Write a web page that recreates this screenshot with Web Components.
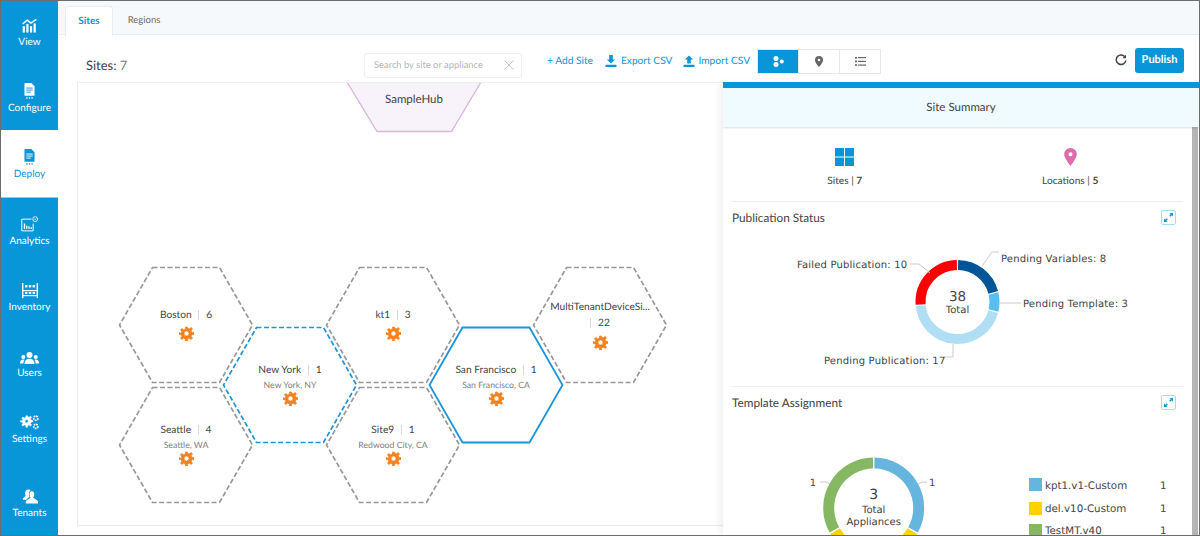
<!DOCTYPE html>
<html>
<head>
<meta charset="utf-8">
<title>Sites</title>
<style>
    html, body { margin: 0; height: 100%; overflow: hidden; background: #fff; }
    body { font-family: Lato, "Open Sans", sans-serif; color: #444; text-rendering: geometricPrecision; }
</style>
</head>
<body>
<app-shell>
    <side-nav slot="nav">
        <nav-item label="View" icon="view"></nav-item>
        <nav-item label="Configure" icon="doc"></nav-item>
        <nav-item label="Deploy" icon="doc" active></nav-item>
        <nav-item label="Analytics" icon="analytics"></nav-item>
        <nav-item label="Inventory" icon="inventory"></nav-item>
        <nav-item label="Users" icon="users"></nav-item>
        <nav-item label="Settings" icon="settings"></nav-item>
        <nav-item label="Tenants" icon="tenants" class="last"></nav-item>
    </side-nav>
    <top-tabs slot="tabs"></top-tabs>
    <tool-bar slot="tools"></tool-bar>
    <site-canvas slot="canvas">
        <hub-node name="SampleHub"></hub-node>
        <hex-node name="Boston" count="6" x="41" y="184"></hex-node>
        <hex-node name="Seattle" count="4" place="Seattle, WA" x="41" y="304"></hex-node>
        <hex-node name="kt1" count="3" x="248" y="184"></hex-node>
        <hex-node name="Site9" count="1" place="Redwood City, CA" x="248" y="304"></hex-node>
        <hex-node name="MultiTenantDeviceSi..." count="22" wrap x="455" y="184"></hex-node>
        <hex-node name="New York" count="1" place="New York, NY" state="pending" x="145" y="244"></hex-node>
        <hex-node name="San Francisco" count="1" place="San Francisco, CA" state="selected" x="351" y="244"></hex-node>
    </site-canvas>
    <site-summary slot="panel"></site-summary>
</app-shell>

<script>
// ── Icons ─────────────────────────────────────────────────────────────────────
const gearPath = 'M10.9 1h-1.8l-.4 2.2-1.5.6-1.9-1.3-1.3 1.3 1.3 1.9-.6 1.5L2.5 6.6v1.8l2.2.4.6 1.5-1.3 1.9 1.3 1.3 1.9-1.3 1.5.6.4 2.2h1.8l.4-2.2 1.5-.6 1.9 1.3 1.3-1.3-1.3-1.9.6-1.5 2.2-.4V6.6l-2.2-.4-.6-1.5 1.3-1.9-1.3-1.3-1.9 1.3-1.5-.6z';

const navIcons = {
    view: `<svg width="17" height="15" viewBox="1 0 17 16.500" fill="currentColor">
        <path d="M2 6.5 7 2.5l4 3 6-4" fill="none" stroke="currentColor" stroke-width="1.6"/>
        <rect x="2" y="9" width="2.4" height="7"/><rect x="6" y="6.5" width="2.4" height="9.5"/>
        <rect x="10" y="9" width="2.4" height="7"/><rect x="14" y="6" width="2.4" height="10"/></svg>`,
    doc: `<svg width="11" height="16.500" viewBox="0 0 12 18" fill="currentColor">
        <path d="M1.5 0H8l3.5 3.5V13a1 1 0 0 1-1 1h-9a1 1 0 0 1-1-1V1a1 1 0 0 1 1-1z"/>
        <g fill="var(--cut)"><rect x="2.5" y="5" width="7" height="1"/><rect x="2.5" y="7.2" width="7" height="1"/><rect x="2.5" y="9.4" width="5" height="1"/></g>
        <rect x="2.5" y="15.5" width="1.4" height="1.6"/><rect x="5.3" y="15.5" width="1.4" height="1.6"/><rect x="8.1" y="15.5" width="1.4" height="1.6"/></svg>`,
    analytics: `<svg width="17" height="16" viewBox="0 0 21 19" fill="none" stroke="currentColor">
        <path d="M13 3.500H1v14.500h14V9" stroke-width="1.200"/><circle cx="17.500" cy="3.500" r="3" stroke-width="1"/>
        <path d="M16.500 3.600l1 .9 1.200-2" stroke-width=".7"/>
        <g fill="currentColor" stroke="none"><rect x="3.500" y="9" width="1.600" height="6.500"/><rect x="6.300" y="11.500" width="1.600" height="4"/><rect x="9.100" y="12.500" width="1.600" height="3"/><rect x="11.900" y="13.500" width="1.600" height="2"/></g></svg>`,
    inventory: `<svg width="16" height="15" viewBox="0 0 16 15" fill="currentColor">
        <rect x="0" y="0" width="1.4" height="15"/><rect x="14.6" y="0" width="1.4" height="15"/>
        <rect x="0" y="7" width="16" height="1.2"/><rect x="0" y="12" width="16" height="1.2"/>
        <rect x="3" y="2" width="2.4" height="2.4"/><rect x="6.8" y="2" width="2.4" height="2.4"/><rect x="10.6" y="2" width="2.4" height="2.4"/>
        <rect x="3" y="9" width="2.4" height="2"/><rect x="6.8" y="9" width="2.4" height="2"/><rect x="10.6" y="9" width="2.4" height="2"/></svg>`,
    users: `<svg width="19" height="12" viewBox="0 0 19 12" fill="currentColor">
        <circle cx="9.5" cy="3" r="3"/><path d="M4.5 12c0-3.4 2-5.3 5-5.3s5 1.900 5 5.300z"/>
        <circle cx="3.300" cy="5" r="2"/><path d="M0 11.500c0-2.600 1.200-4 3.300-4 .5 0 .9.100 1.300.2-.8 1-1.200 2.300-1.300 3.800z"/>
        <circle cx="15.700" cy="5" r="2"/><path d="M19 11.500c0-2.600-1.200-4-3.300-4-.5 0-.9.100-1.300.2.800 1 1.200 2.300 1.300 3.800z"/></svg>`,
    settings: `<svg width="19" height="15" viewBox="0 0 19 15"><path transform="translate(-1.500 0) scale(.82)" fill="currentColor" stroke="currentColor" stroke-width=".6" stroke-linejoin="round" fill-rule="evenodd" d="${gearPath}M10 5.500a2 2 0 1 0 0 4 2 2 0 0 0 0-4z"/>
        <g fill="none" stroke="currentColor" stroke-dasharray="1.600 .7"><circle cx="15.800" cy="3.200" r="2.100" stroke-width="1.600"/><circle cx="15.800" cy="11.400" r="2.100" stroke-width="1.600"/></g></svg>`,
    tenants: `<svg width="17" height="15" viewBox="0 0 18 15" fill="currentColor">
        <path d="M8 0C5.500 0 4.300 1.800 4.300 4c0 1 .2 2 .7 2.700L2 9.500V11h3.500L9 7.800C8.500 7 8.400 6 8.400 4.700 8.400 3 9 1.700 10.200.8 9.600.3 8.900 0 8 0z"/>
        <path d="M11.500 2C9.800 2 9 3.400 9 5.200c0 1.300.4 2.300 1 3 .2.300.1.700-.2.900L6 11.600c-.6.400-1 1-1 1.700V15h13v-1.700c0-.7-.4-1.300-1-1.700l-3.800-2.500c-.3-.2-.4-.6-.2-.900.6-.7 1-1.700 1-3C14 3.400 13.200 2 11.500 2z"/></svg>`
};

// ── Shell: nav on the left, tabs / toolbar / work area stacked on the right ───
class AppShell extends HTMLElement {
    constructor() {
        super();
        this.attachShadow({ mode: 'open' }).innerHTML = `
            <style>
                :host { display: grid; grid-template-columns: 57px 1fr; width: 1200px; height: 536px;
                        box-sizing: border-box; border: 1px solid #6d6d6d; overflow: hidden; }
                .main { display: flex; flex-direction: column; min-width: 0; height: 534px; }
                .work { position: relative; flex: 1; min-height: 0; }
                ::slotted([slot=panel]) { position: absolute; top: 0; right: 0; bottom: 0; }
            </style>
            <slot name="nav"></slot>
            <div class="main">
                <slot name="tabs"></slot>
                <slot name="tools"></slot>
                <div class="work">
                    <slot name="canvas"></slot>
                    <slot name="panel"></slot>
                </div>
            </div>`;
    }
}
customElements.define('app-shell', AppShell);

class SideNav extends HTMLElement {
    constructor() {
        super();
        this.attachShadow({ mode: 'open' }).innerHTML = `
            <style>
                :host { display: flex; flex-direction: column; height: 534px; background: #0996d9; overflow: hidden; }
                ::slotted(nav-item:first-child) { margin-top: -3.500px; }
                ::slotted(nav-item.last) { margin-top: 7.500px; }
            </style>
            <slot></slot>`;
    }
}
customElements.define('side-nav', SideNav);

class NavItem extends HTMLElement {
    constructor() {
        super();
        this.attachShadow({ mode: 'open' });
    }

    connectedCallback() {
        const active = this.hasAttribute('active');
        this.shadowRoot.innerHTML = `
            <style>
                :host { flex: none; height: 66.200px; box-sizing: border-box; display: flex; flex-direction: column;
                        align-items: center; gap: 3px; padding-top: 15.500px; font-size: 10px; line-height: 13px;
                        color: ${active ? '#0996d9' : '#fff'}; background: ${active ? '#fff' : 'transparent'};
                        ${active ? 'box-shadow: 0 1.500px 0 #fff;' : ''}
                        --cut: ${active ? '#fff' : '#0996d9'}; }
                .icon { display: flex; align-items: flex-end; justify-content: center; height: 20px; }
            </style>
            <div class="icon">${navIcons[this.getAttribute('icon')]}</div>
            <div>${this.getAttribute('label')}</div>`;
    }
}
customElements.define('nav-item', NavItem);

class TopTabs extends HTMLElement {
    constructor() {
        super();
        this.attachShadow({ mode: 'open' }).innerHTML = `
            <style>
                :host { display: flex; height: 34px; box-sizing: border-box; padding: 5px 0 0 7px;
                        background: #f6f9fc; border-bottom: 1px solid #e9edf0; font-size: 10px; }
                div { width: 48px; height: 29px; line-height: 29px; text-align: center; color: #6d6d6d; }
                .on { box-sizing: border-box; background: #fff; color: #0996d9; font-weight: 700; border: 1px solid #e9edf0;
                      border-bottom: 0; border-radius: 3px 3px 0 0; height: 30px; line-height: 28px; }
                .off { margin-left: 7px; font-size: 9.500px; }
            </style>
            <div class="on">Sites</div>
            <div class="off">Regions</div>`;
    }
}
customElements.define('top-tabs', TopTabs);

class ToolBar extends HTMLElement {
    constructor() {
        super();
        this.attachShadow({ mode: 'open' }).innerHTML = `
            <style>
                :host { display: flex; align-items: center; height: 47px; box-sizing: border-box; padding: 5px 15px 0 28px;
                        font-size: 10.200px; color: #0996d9; }
                .count { width: 278px; font-size: 13px; color: #444; padding-top: 9.500px; height: 24px; box-sizing: border-box;
                         line-height: 12px; }
                .count span { color: #777; }
                .search { display: flex; align-items: center; justify-content: space-between; width: 158px; height: 25px;
                          box-sizing: border-box; margin-top: 8px; padding: 0 7px 0 9px; border: 1px solid #eceff1; border-radius: 3px;
                          color: #b5b5b5; font-size: 9.400px; }
                a { display: flex; align-items: center; white-space: nowrap; }
                .add { margin-left: 25px; }
                .exp { margin-left: 12px; gap: 4px; }
                .imp { margin-left: 11px; gap: 3px; }
                .seg { display: flex; margin-left: 7px; height: 25px; border: 1px solid #e6e9eb; box-sizing: border-box; }
                .seg div { width: 40px; display: flex; align-items: center; justify-content: center; border-left: 1px solid #e6e9eb; }
                .seg div:first-child { background: #0996d9; border-left: 0; }
                .refresh { margin-left: auto; margin-right: 8px; margin-top: -2px; display: flex; }
                .publish { width: 49px; height: 25px; margin-top: -1px; line-height: 24px; text-align: center; background: #0996d9; color: #fff;
                           border-radius: 3px; font-weight: 700; font-size: 11px; }
            </style>
            <div class="count">Sites: <span>7</span></div>
            <div class="search">
                <span>Search by site or appliance</span>
                <svg width="10" height="10" viewBox="0 0 10 10" stroke="#c4c4c4" stroke-width="1"><path d="M.5.5l9 9M9.500.5l-9 9"/></svg>
            </div>
            <a class="add">+ Add Site</a>
            <a class="exp"><svg width="12" height="12" viewBox="0 0 12 12" fill="currentColor"><path d="M4.200 0h3.600v4.500H10.200L6 8.500 1.800 4.500h2.400z"/><rect x="0.500" y="9.700" width="11" height="2.300" rx=".4"/></svg><span>Export CSV</span></a>
            <a class="imp"><svg width="12" height="12" viewBox="0 0 12 12" fill="currentColor"><path d="M4.200 8.500h3.600V4.500h2.400L6 .5 1.800 4.500h2.400z"/><rect x="0.500" y="9.700" width="11" height="2.300" rx=".4"/></svg><span>Import CSV</span></a>
            <div class="seg">
                <div><svg width="11" height="11" viewBox="0 0 11 11" fill="#fff"><circle cx="3" cy="2.600" r="2.500"/><circle cx="3" cy="8.400" r="2.500"/><circle cx="8.800" cy="5.500" r="2"/></svg></div>
                <div><svg width="8" height="11" viewBox="0 0 8 11"><path fill="#666" fill-rule="evenodd" d="M4 0a4 4 0 0 0-4 4c0 2.600 3 5.800 4 7 1-1.200 4-4.400 4-7a4 4 0 0 0-4-4zm0 2.700a1.300 1.300 0 1 1 0 2.600 1.300 1.300 0 0 1 0-2.600z"/></svg></div>
                <div><svg width="11" height="9" viewBox="0 0 11 9" fill="#666"><rect y="0" width="2" height="1.600"/><rect x="3" y="0" width="8" height="1.200"/><rect y="3.600" width="2" height="1.600"/><rect x="3" y="3.800" width="8" height="1.200"/><rect y="7.200" width="2" height="1.600"/><rect x="3" y="7.500" width="8" height="1.200"/></svg></div>
            </div>
            <div class="refresh"><svg width="12" height="12" viewBox="0 0 12 12" fill="none" stroke="#444" stroke-width="1.500"><path d="M10.300 3.500A4.800 4.800 0 1 0 10.800 6.500"/><path d="M11 .7v3.500H7.500" stroke-width="0" fill="#444"/></svg></div>
            <div class="publish">Publish</div>`;
    }
}
customElements.define('tool-bar', ToolBar);

// ── Canvas and its nodes: placed freely, the coordinates are the content ──────
class SiteCanvas extends HTMLElement {
    constructor() {
        super();
        this.attachShadow({ mode: 'open' }).innerHTML = `
            <style>
                :host { display: block; position: relative; margin-left: 19px; width: 1000px; height: 444px; box-sizing: border-box;
                        border: 1px solid #ebebeb; border-top: 1px solid #eee; overflow: hidden; }
            </style>
            <slot></slot>`;
    }
}
customElements.define('site-canvas', SiteCanvas);

class HubNode extends HTMLElement {
    constructor() {
        super();
        this.attachShadow({ mode: 'open' });
    }

    connectedCallback() {
        this.shadowRoot.innerHTML = `
            <style>
                :host { position: absolute; left: 268px; top: -1px; width: 136px; height: 52px; display: block; }
                svg { position: absolute; inset: 0; }
                div { position: relative; text-align: center; font-size: 11.500px; line-height: 14px; padding-top: 11px; color: #444; }
            </style>
            <svg width="136" height="52" viewBox="0 0 136 52"><path d="M1 0 31 49.500H105.500L135 0" fill="#f8f3fb" stroke="#dcb4dc" stroke-width="1.300"/></svg>
            <div>${this.getAttribute('name')}</div>`;
    }
}
customElements.define('hub-node', HubNode);

class HexNode extends HTMLElement {
    constructor() {
        super();
        this.attachShadow({ mode: 'open' });
    }

    connectedCallback() {
        const state = this.getAttribute('state');
        const stroke = state ? '#1b96d8' : '#999';
        const dash = state === 'selected' ? 'none' : '5 2.500';
        const place = this.getAttribute('place');
        const wrap = this.hasAttribute('wrap');
        const sep = `<i></i>`;
        const title = wrap
            ? `<div class="t">${this.getAttribute('name')}</div><div class="t wrapped">${sep}<b>${this.getAttribute('count')}</b></div>`
            : `<div class="t">${this.getAttribute('name')}${sep}<b>${this.getAttribute('count')}</b></div>`;
        this.shadowRoot.innerHTML = `
            <style>
                :host { position: absolute; left: ${this.getAttribute('x')}px; top: ${this.getAttribute('y')}px;
                        width: 134px; height: 116px; display: block; }
                svg.hex { position: absolute; inset: 0; overflow: visible; }
                .body { position: relative; display: flex; flex-direction: column; align-items: center;
                        padding-top: ${wrap ? 32 : (place ? 36 : 41)}px; box-sizing: border-box; height: 100%; }
                .t { display: flex; align-items: center; font-size: 10.200px; line-height: 14px; color: #444; white-space: nowrap;
                     height: ${wrap ? 15 : 14}px; }
                .wrapped { margin-top: 1px; }
                .t i { width: 1px; height: 10px; background: #d8d8d8; margin: 0 7px 0 6.500px; }
                .wrapped i { margin-left: 0; }
                .t b { font-weight: 400; }
                .p { font-size: 8.700px; line-height: 13px; color: #808080; margin-top: 1px; white-space: nowrap; }
                .g { margin-top: ${place ? 0 : (wrap ? 5 : 4)}px; display: flex; }
            </style>
            <svg class="hex" width="134" height="116" viewBox="0 0 134 116">
                <path d="M33.500 .5H100.500L133.500 58 100.500 115.500H33.500L.5 58Z" fill="none" stroke="${stroke}"
                      stroke-width="${state === 'selected' ? 1.800 : 1.700}" stroke-dasharray="${dash}"/>
            </svg>
            <div class="body">
                ${title}
                ${place ? `<div class="p">${place}</div>` : ''}
                <div class="g"><svg width="15" height="15" viewBox="2.500 0 15 15"><path fill="#f5821f" stroke="#f5821f" stroke-width=".7" stroke-linejoin="round" fill-rule="evenodd" d="${gearPath}M10 5a2.500 2.500 0 1 0 0 5 2.500 2.500 0 0 0 0-5z"/></svg></div>
            </div>`;
    }
}
customElements.define('hex-node', HexNode);

// ── Right hand summary panel ──────────────────────────────────────────────────
class SiteSummary extends HTMLElement {
    constructor() {
        super();
        this.attachShadow({ mode: 'open' }).innerHTML = `
            <style>
                :host { display: flex; flex-direction: column; width: 476px; background: #fff;
                        box-shadow: -4px 0 6px rgba(0,0,0,.05); overflow: hidden; font-size: 10.200px; }
                .bar { height: 6px; background: #0996d9; flex: none; }
                .head { height: 39px; line-height: 40px; flex: none; text-align: center; background: #f0fbff; color: #444; font-size: 11.500px;
                        box-shadow: 0 1px 2px rgba(0,0,0,.12); position: relative; }
                .body { flex: 1; min-height: 0; display: flex; }
                .scroll { flex: 1; min-width: 0; padding: 0 9px; overflow: hidden; }
                .track { width: 6px; flex: none; background: #b4b4b4; margin-right: 1px; }
                .stats { display: grid; grid-template-columns: 1fr 1fr; height: 75px; border-bottom: 1px solid #eee; box-sizing: border-box; }
                .stat { display: flex; flex-direction: column; align-items: center; padding-top: 21px; gap: 7px; }
                .ic { height: 20px; display: flex; }
                .stat b { font-weight: 700; }
                .sec { display: flex; justify-content: space-between; align-items: center; height: 31px; font-size: 11.800px; color: #444; }
                .sec svg { margin-right: 7px; }
                .divider { border-top: 1px solid #eee; }
                .chart { display: block; }
            </style>
            <div class="bar"></div>
            <div class="head">Site Summary</div>
            <div class="body">
                <div class="scroll">
                    <div class="stats">
                        <div class="stat">
                            <div class="ic"><svg width="19" height="18" viewBox="0 0 19 18" fill="#0996d9"><rect width="9" height="8.500"/><rect x="10" width="9" height="8.500"/><rect y="9.500" width="9" height="8.500"/><rect x="10" y="9.500" width="9" height="8.500"/></svg></div>
                            <div>Sites | <b>7</b></div>
                        </div>
                        <div class="stat">
                            <div class="ic"><svg width="13" height="18" viewBox="0 0 13 18"><path fill="#de6cac" fill-rule="evenodd" d="M6.500 0A6.300 6.300 0 0 0 .2 6.300C.2 10 4.500 15 6.500 18c2-3 6.300-8 6.300-11.700A6.300 6.300 0 0 0 6.500 0zm0 4.300a2 2 0 1 1 0 4 2 2 0 0 1 0-4z"/></svg></div>
                            <div>Locations | <b>5</b></div>
                        </div>
                    </div>
                    <div class="sec"><span>Publication Status</span>${this.expandIcon()}</div>
                    <donut-chart class="chart" height="153" cx="225.500" cy="69" r="37" w="10"
                        total="38" caption="Total" big="13.500"
                        colors="#005596,#5bbdf0,#b0dff5,#ff0000" values="8,3,17,10"></donut-chart>
                    <div class="divider"></div>
                    <div class="sec"><span>Template Assignment</span>${this.expandIcon()}</div>
                    <donut-chart class="chart" height="120" cx="141.700" cy="90" r="45" w="11"
                        total="3" caption="Total|Appliances" big="14"
                        colors="#66b5de,#ffd200,#86b863" values="1,1,1" legend></donut-chart>
                </div>
                <div class="track"></div>
            </div>`;
    }

    expandIcon() {
        return `<svg width="15" height="15" viewBox="0 0 15 15"><rect x=".5" y=".5" width="14" height="14" rx="1.500" fill="#fff" stroke="#a6dcf5"/>
            <path fill="#0996d9" d="M8.500 3H12v3.500L10.800 5.300 9.300 6.800 8.200 5.700 9.700 4.200zM6.500 12H3V8.500L4.200 9.700 5.700 8.200 6.800 9.300 5.300 10.800z"/></svg>`;
    }
}

class DonutChart extends HTMLElement {
    constructor() {
        super();
        this.attachShadow({ mode: 'open' });
    }

    connectedCallback() {
        const cx = +this.getAttribute('cx');
        const cy = +this.getAttribute('cy');
        const r = +this.getAttribute('r');
        const w = +this.getAttribute('w');
        const height = +this.getAttribute('height');
        const values = this.getAttribute('values').split(',').map(Number);
        const colors = this.getAttribute('colors').split(',');
        const sum = values.reduce((a, b) => a + b, 0);
        const gap = 0.9;

        const pt = (deg) => {
            const a = (deg - 90) * Math.PI / 180;
            return `${(cx + r * Math.cos(a)).toFixed(2)} ${(cy + r * Math.sin(a)).toFixed(2)}`;
        };

        let start = 0;
        const arcs = values.map((v, i) => {
            const end = start + v / sum * 360;
            const large = end - start > 180 ? 1 : 0;
            const d = `M${pt(start + gap)}A${r} ${r} 0 ${large} 1 ${pt(end - gap)}`;
            start = end;
            return `<path d="${d}" fill="none" stroke="${colors[i]}" stroke-width="${w}"/>`;
        }).join('');

        const lines = this.getAttribute('caption').split('|');
        const big = this.getAttribute('big') || 16;
        const caption = lines.map((t, i) =>
            `<text x="${cx}" y="${cy + (lines.length > 1 ? 5 : 11) + i * 12}" text-anchor="middle" font-size="10">${t}</text>`).join('');

        const extra = this.hasAttribute('legend') ? this.legendMarkup() : this.calloutMarkup();

        this.shadowRoot.innerHTML = `
            <style>
                :host { display: block; height: ${height}px; overflow: hidden; }
                svg { display: block; font-family: "DejaVu Sans", Verdana, sans-serif; fill: #444; }
            </style>
            <svg width="450" height="${height}" viewBox="0 0 450 ${height}">
                ${arcs}
                <text x="${cx}" y="${cy - (lines.length > 1 ? 9 : 1)}" text-anchor="middle" font-size="${big}">${this.getAttribute('total')}</text>
                ${caption}
                ${extra}
            </svg>`;
    }

    calloutMarkup() {
        const leader = 'fill="none" stroke="#ccc" stroke-width="1"';
        return `
            <path d="M250 33 260 19H267" ${leader}/>
            <path d="M268 70H289" ${leader}/>
            <path d="M221 111V124H212" ${leader}/>
            <path d="M198 40 187 31H178" ${leader}/>
            <text x="269" y="29" font-size="10" letter-spacing=".18">Pending Variables: 8</text>
            <text x="291" y="74" font-size="10" letter-spacing=".18">Pending Template: 3</text>
            <text x="92" y="131" font-size="10" letter-spacing=".18">Pending Publication: 17</text>
            <text x="65" y="35" font-size="10" letter-spacing=".18">Failed Publication: 10</text>`;
    }

    legendMarkup() {
        const rows = [['kpt1.v1-Custom', '#66b5de', 60, 71], ['del.v10-Custom', '#ffd200', 84, 94], ['TestMT.v40', '#86b863', 106, 116]];
        return `
            <path d="M186 66 190 64H195" fill="none" stroke="#ccc"/>
            <path d="M88 64H94L98 66" fill="none" stroke="#ccc"/>
            <text x="197" y="68" font-size="10">1</text>
            <text x="84" y="68" font-size="10" text-anchor="end">1</text>
            ${rows.map(([t, c, y, base]) => `
                <rect x="297" y="${y}" width="13" height="13" fill="${c}"/>
                <text x="313" y="${base}" font-size="10.300">${t}</text>
                <text x="428" y="${base}" font-size="10.300">1</text>`).join('')}`;
    }
}
customElements.define('donut-chart', DonutChart);
customElements.define('site-summary', SiteSummary);
</script>
</body>
</html>
